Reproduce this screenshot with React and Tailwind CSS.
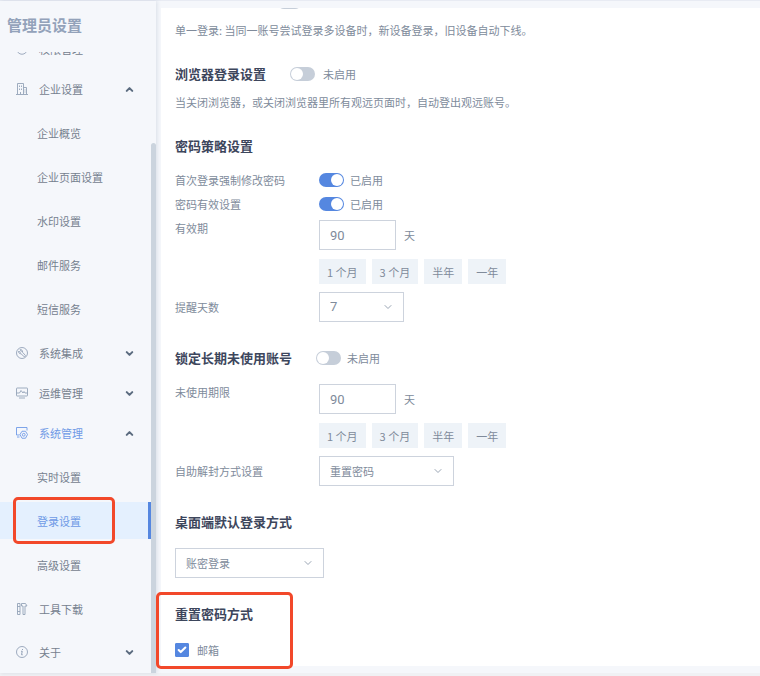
import React, { useState } from 'react';
import clsx from 'clsx';
import { ChevronDown, ChevronUp, Check } from 'lucide-react';

const iconProps = {
  viewBox: '0 0 24 24',
  fill: 'none',
  stroke: 'currentColor',
  strokeWidth: 1.8,
  className: 'h-3 w-3 shrink-0',
  'aria-hidden': true,
};

const PermissionIcon = () => (
  <svg {...iconProps}>
    <circle cx="12" cy="12" r="10.5" />
    <path d="M8 12l3 3 5-6" />
  </svg>
);

const CompanyIcon = () => (
  <svg {...iconProps}>
    <path d="M3 22V1h12v21M15 9h6v13M0 23h24" />
    <path d="M7 5v3M11 5v3M7 11v3M11 11v3M9 22v-4M18 13v2M18 17v2" />
  </svg>
);

const IntegrationIcon = () => (
  <svg {...iconProps}>
    <circle cx="12" cy="12" r="11" />
    <path d="M8 5.500l3 3-2.500 2.500-3-3c-1 3 1 6 4.500 5.500l6 5.500c2 1 3.500-1 2.500-2.500L13 10.500c.8-3.500-2-6-5-5z" />
  </svg>
);

const OpsIcon = () => (
  <svg {...iconProps}>
    <rect x="1" y="2" width="22" height="16" rx="1" />
    <path d="M1 12h6l3-5 4 5 2-3 2 3h5M6 22h12" />
  </svg>
);

const SystemIcon = () => (
  <svg {...iconProps}>
    <path d="M7 16H1V1h21v6M2 20h5" />
    <path d="M12 8.500h7l4 6.500-4 7.500h-7L8 15z" />
    <circle cx="15.500" cy="15.500" r="2.800" />
  </svg>
);

const ToolsIcon = () => (
  <svg {...iconProps}>
    <path d="M3 1h5v22H3zM3 7h5M3 17h5M11 1h8l3 5h-4v17h-4V6h-3z" />
  </svg>
);

const AboutIcon = () => (
  <svg {...iconProps}>
    <circle cx="12" cy="12" r="11" />
    <path d="M10 10.500h2.500L11 17.500h2.500M13 6v2" strokeWidth="2" />
  </svg>
);

const menu = [
  { name: '权限管理', icon: PermissionIcon },
  {
    name: '企业设置',
    icon: CompanyIcon,
    open: true,
    children: ['企业概览', '企业页面设置', '水印设置', '邮件服务', '短信服务'],
  },
  { name: '系统集成', icon: IntegrationIcon, open: false },
  { name: '运维管理', icon: OpsIcon, open: false },
  {
    name: '系统管理',
    icon: SystemIcon,
    open: true,
    active: true,
    children: ['实时设置', '登录设置', '高级设置'],
  },
  { name: '工具下载', icon: ToolsIcon, spaced: true },
  { name: '关于', icon: AboutIcon, open: false },
];

const MenuGroup = ({ item, current, onSelect }) => {
  const Icon = item.icon;
  const Arrow = item.open ? ChevronUp : ChevronDown;

  return (
    <li className={clsx(item.spaced && 'pb-[3px]')}>
      <button
        type="button"
        className={clsx(
          'flex h-10 w-full items-center pl-4 pr-4',
          item.active ? 'text-[#6f9ae6]' : 'text-[#76818f]'
        )}
      >
        <span className={clsx('flex', !item.active && 'text-[#94a3b8]')}>
          <Icon />
        </span>
        <span className="ml-[11px]">{item.name}</span>
        {item.open !== undefined && (
          <Arrow
            className="ml-auto h-[11px] w-[11px] text-[#5b6b7f]"
            strokeWidth={4.5}
            aria-hidden="true"
          />
        )}
      </button>
      {item.children && (
        <ul className="flex flex-col gap-[7px] pb-[6px] pt-[5px]">
          {item.children.map((child) => (
            <li key={child} className="relative">
              <button
                type="button"
                onClick={() => onSelect(child)}
                className={clsx(
                  'block h-[37px] w-full border-r-[3px] pl-[37px] text-left',
                  child === current
                    ? 'border-[#5587e0] bg-[#e4f0fe] text-[#6f9ae6]'
                    : 'border-transparent text-[#76818f]'
                )}
              >
                {child}
              </button>
              {child === '登录设置' && (
                <span className="pointer-events-none absolute -inset-y-[5px] left-[13px] w-[102px] rounded-[5px] border-[3px] border-[#f2482a]" />
              )}
            </li>
          ))}
        </ul>
      )}
    </li>
  );
};

const Toggle = ({ defaultChecked, label }) => (
  <span className="relative inline-flex h-[14px] w-[25px] shrink-0">
    <input
      type="checkbox"
      role="switch"
      aria-label={label}
      defaultChecked={defaultChecked}
      className="peer h-full w-full appearance-none rounded-full bg-[#c6ced9] checked:bg-[#5587e0]"
    />
    <span className="pointer-events-none absolute left-px top-px h-3 w-3 rounded-full bg-white peer-checked:left-3" />
  </span>
);

const SelectBox = ({ id, label, options, className }) => (
  <div className={clsx('relative', className)}>
    <select
      id={id}
      aria-label={label}
      className="h-[30px] w-full appearance-none border border-[#cdd3dd] bg-white pl-[10px] text-[#808b9b]"
    >
      {options.map((option) => (
        <option key={option}>{option}</option>
      ))}
    </select>
    <ChevronDown
      className="pointer-events-none absolute right-[10px] top-[9px] h-3 w-3 text-[#9aa5b4]"
      aria-hidden="true"
    />
  </div>
);

const Title = ({ children }) => (
  <h2 className="text-[13px] font-bold leading-5 text-[#3d465c]">{children}</h2>
);

const periods = ['1 个月', '3 个月', '半年', '一年'];

const PeriodField = ({ id, label }) => (
  <div className="flex items-start">
    <label htmlFor={id} className="w-36 shrink-0">
      {label}
    </label>
    <div>
      <div className="flex items-center gap-2">
        <input
          id={id}
          type="text"
          defaultValue="90"
          className="h-[30px] w-[77px] border border-[#cdd3dd] bg-white px-[10px] font-['Roboto',sans-serif] text-[13px] text-[#808b9b]"
        />
        <span>天</span>
      </div>
      <div className="mt-[9px] flex gap-[6px]">
        {periods.map((period) => (
          <button key={period} type="button" className="h-[25px] bg-[#eef3f8] px-2">
            {period}
          </button>
        ))}
      </div>
    </div>
  </div>
);

const SwitchField = ({ label }) => (
  <div className="flex items-center">
    <span className="w-36 shrink-0">{label}</span>
    <Toggle defaultChecked label={label} />
    <span className="ml-[6px]">已启用</span>
  </div>
);

const App = () => {
  const [current, setCurrent] = useState('登录设置');

  return (
    <div className="flex min-h-screen flex-col border-b-[3px] border-t border-b-[#f0f1f4] border-t-[#e8ebf3] bg-[#f5f7fb] font-['Noto_Sans_CJK_SC',sans-serif] text-[11px] leading-4 text-[#808b9b]">
      <div className="flex flex-1">
        <aside className="relative w-[156px] shrink-0 bg-[#f5f7fb] pr-[5px] shadow-[1px_0_4px_rgba(120,135,165,0.22)]">
          <h1 className="h-[51px] pl-[7px] pt-[14px] text-[15px] font-bold leading-5 text-[#93a2ba]">
            管理员设置
          </h1>
          <nav className="overflow-hidden">
            <ul className="-mt-[23px]">
              {menu.map((item) => (
                <MenuGroup key={item.name} item={item} current={current} onSelect={setCurrent} />
              ))}
            </ul>
          </nav>
          {/* scroll thumb */}
          <div className="absolute bottom-0 right-0 top-[142px] w-[5px] rounded-t-full bg-[#cbd4de]" />
        </aside>

        <main className="min-w-0 flex-1 pb-[7px] pl-[5px] pt-[7px]">
          <div className="h-full bg-white px-[14px]">
            <div className="flex h-px items-end overflow-hidden pl-[102px]">
              <Toggle label="单一登录" />
            </div>
            <p className="mt-[13px]">
              单一登录: 当同一账号尝试登录多设备时，新设备登录，旧设备自动下线。
            </p>

            <section className="mt-[26px]">
              <div className="flex items-center">
                <Title>浏览器登录设置</Title>
                <span className="ml-6 flex items-center gap-2">
                  <Toggle label="浏览器登录设置" />
                  未启用
                </span>
              </div>
              <p className="mt-[10px]">
                当关闭浏览器，或关闭浏览器里所有观远页面时，自动登出观远账号。
              </p>
            </section>

            <section className="mt-[26px]">
              <Title>密码策略设置</Title>
              <div className="mt-4 flex flex-col gap-2">
                <SwitchField label="首次登录强制修改密码" />
                <SwitchField label="密码有效设置" />
                <PeriodField id="validity" label="有效期" />
                <div className="flex items-center">
                  <label htmlFor="remind" className="w-36 shrink-0">
                    提醒天数
                  </label>
                  <SelectBox
                    id="remind"
                    options={['7', '15', '30']}
                    className="w-[85px] font-['Roboto',sans-serif] text-[13px]"
                  />
                </div>
              </div>
            </section>

            <section className="mt-[26px]">
              <div className="flex items-center">
                <Title>锁定长期未使用账号</Title>
                <span className="ml-6 flex items-center gap-[6px]">
                  <Toggle label="锁定长期未使用账号" />
                  未启用
                </span>
              </div>
              <div className="mt-4 flex flex-col gap-2">
                <PeriodField id="unused" label="未使用期限" />
                <div className="flex items-center">
                  <label htmlFor="unlock" className="w-36 shrink-0">
                    自助解封方式设置
                  </label>
                  <SelectBox id="unlock" options={['重置密码', '邮箱验证']} className="w-[135px]" />
                </div>
              </div>
            </section>

            <section className="mt-[26px]">
              <Title>桌面端默认登录方式</Title>
              <SelectBox
                label="桌面端默认登录方式"
                options={['账密登录', '扫码登录']}
                className="mt-4 w-[149px]"
              />
            </section>

            <section className="relative mt-[26px]">
              <Title>重置密码方式</Title>
              <label className="mt-4 flex h-5 w-fit items-center gap-2">
                <span className="relative flex">
                  <input
                    type="checkbox"
                    defaultChecked
                    className="peer h-[14px] w-[14px] appearance-none rounded-[1px] border border-[#cdd3dd] checked:border-[#5587e0] checked:bg-[#5587e0]"
                  />
                  <Check
                    className="pointer-events-none absolute left-[2px] top-[2px] hidden h-[10px] w-[10px] text-white peer-checked:block"
                    strokeWidth={5}
                    aria-hidden="true"
                  />
                </span>
                邮箱
              </label>
              <span className="pointer-events-none absolute -bottom-[9px] -left-[19px] -top-3 w-[137px] rounded-[5px] border-[3px] border-[#f2482a]" />
            </section>
          </div>
        </main>
      </div>
    </div>
  );
};

export default App;
